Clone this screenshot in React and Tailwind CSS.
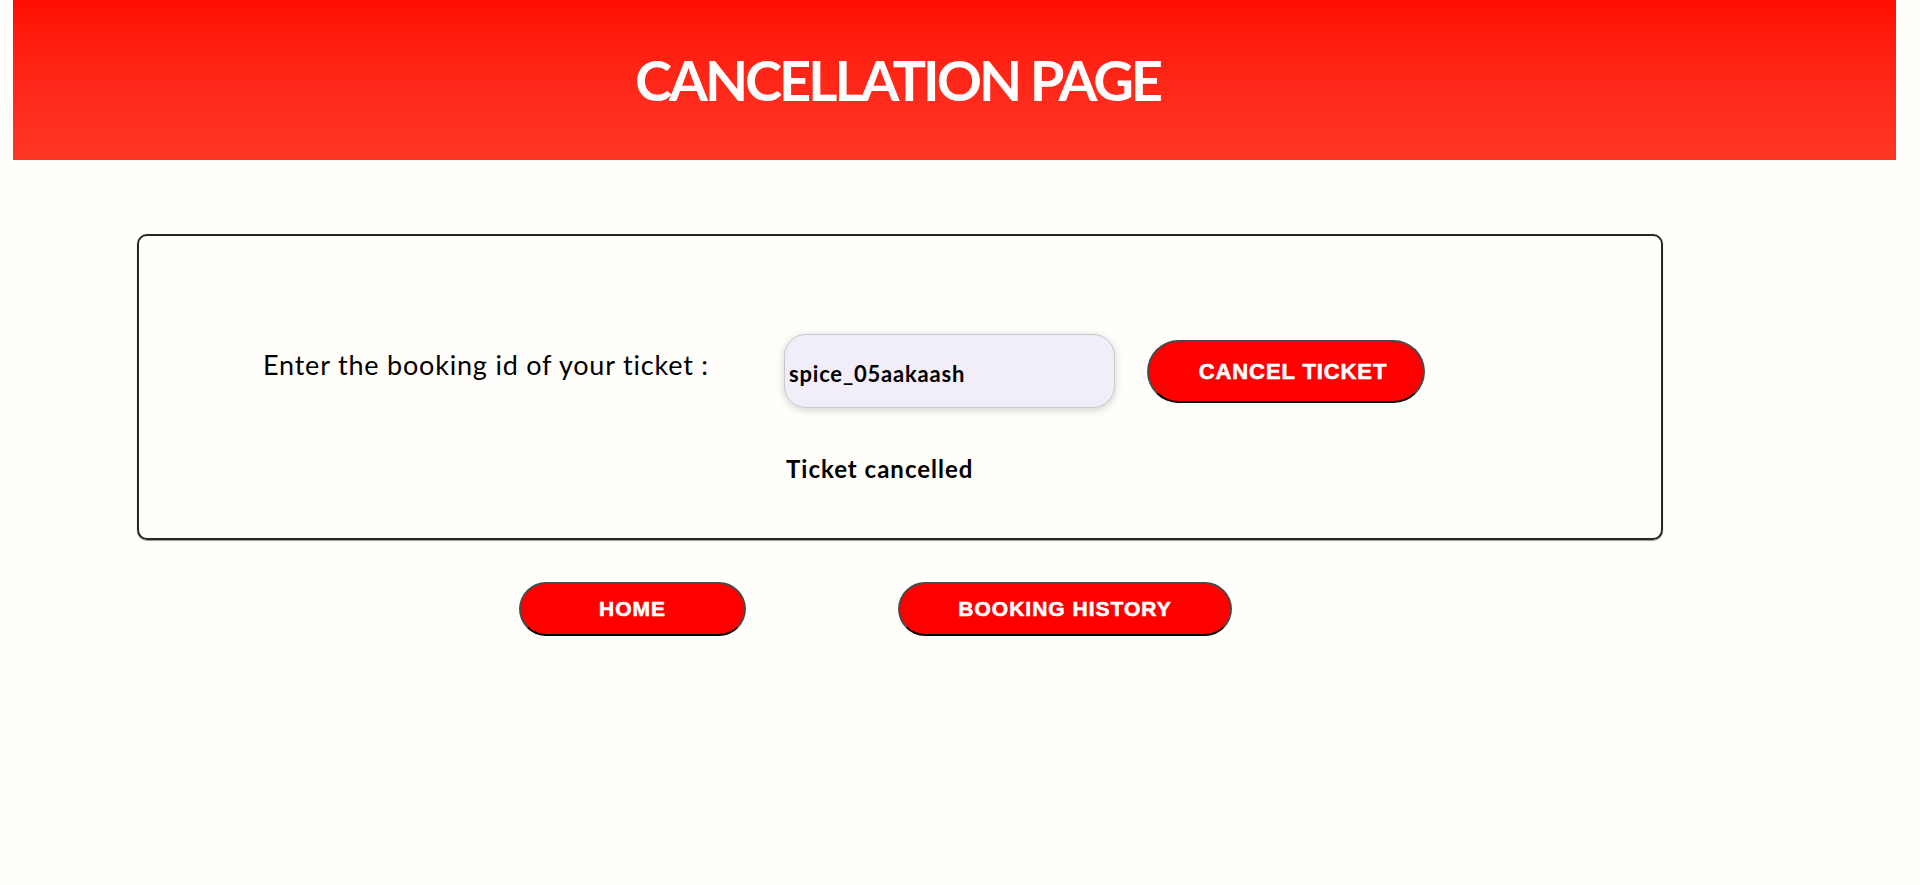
import { useState } from "react";

export default function App() {
  const [bookingId, setBookingId] = useState("spice_05aakaash");
  const [status, setStatus] = useState("Ticket cancelled");

  const handleCancel = () => {
    setStatus(bookingId ? "Ticket cancelled" : "Please enter a booking id");
  };

  return (
    <div className="min-h-screen bg-[#fffefa] pb-10">
      {/* Header */}
      <header className="ml-[13px] mr-[24px] h-[160px] flex items-center justify-center pr-[114px] bg-linear-to-b from-[#ff0c00] to-[#ff3626]">
        <h1 className="text-white font-bold text-[56px] tracking-[-3px] font-['Lato',sans-serif]">
          CANCELLATION PAGE
        </h1>
      </header>

      {/* Cancel card */}
      <div className="ml-[137px] mt-[74px] w-[1526px] h-[306px] rounded-[10px] border-2 border-[#262626] shadow-[0_1px_1px_rgba(0,0,0,0.4)]">
        <div className="flex items-center pl-[124px] pt-[98px]">
          <label className="w-[521px] mb-3 text-[27px] tracking-[0.8px] text-black font-['Lato',sans-serif]">
            Enter the booking id of your ticket :
          </label>

          <input
            type="text"
            value={bookingId}
            onChange={(e) => setBookingId(e.target.value)}
            className="w-[331px] h-[74px] rounded-[22px] border border-[#c9c9c9] bg-[#f1eefa] px-1 pt-1 text-[22px] tracking-[0.8px] font-bold text-black shadow-[0_2px_8px_rgba(0,0,0,0.18)] outline-none font-['Lato',sans-serif]"
          />

          <button
            onClick={handleCancel}
            className="ml-[32px] w-[278px] h-[63px] pl-[14px] rounded-full border-2 border-[#4a4a4a] border-b-black bg-[#ff0000] text-white font-bold text-[22px] tracking-[0.9px] [-webkit-text-stroke:0.6px_white] font-['Liberation_Sans',sans-serif]"
          >
            CANCEL TICKET
          </button>
        </div>

        {/* Status */}
        <p className="ml-[647px] mt-[43px] text-[24px] tracking-[1px] font-bold text-black font-['Lato',sans-serif]">
          {status}
        </p>
      </div>

      {/* Nav buttons */}
      <div className="flex ml-[519px] mt-[42px] gap-[152px]">
        <button className="w-[227px] h-[54px] rounded-full border-2 border-[#4a4a4a] border-b-black bg-[#ff0000] text-white font-bold text-[21px] tracking-[1px] [-webkit-text-stroke:0.6px_white] font-['Liberation_Sans',sans-serif]">
          HOME
        </button>
        <button className="w-[334px] h-[54px] rounded-full border-2 border-[#4a4a4a] border-b-black bg-[#ff0000] text-white font-bold text-[21px] tracking-[1px] [-webkit-text-stroke:0.6px_white] font-['Liberation_Sans',sans-serif]">
          BOOKING HISTORY
        </button>
      </div>
    </div>
  );
}
